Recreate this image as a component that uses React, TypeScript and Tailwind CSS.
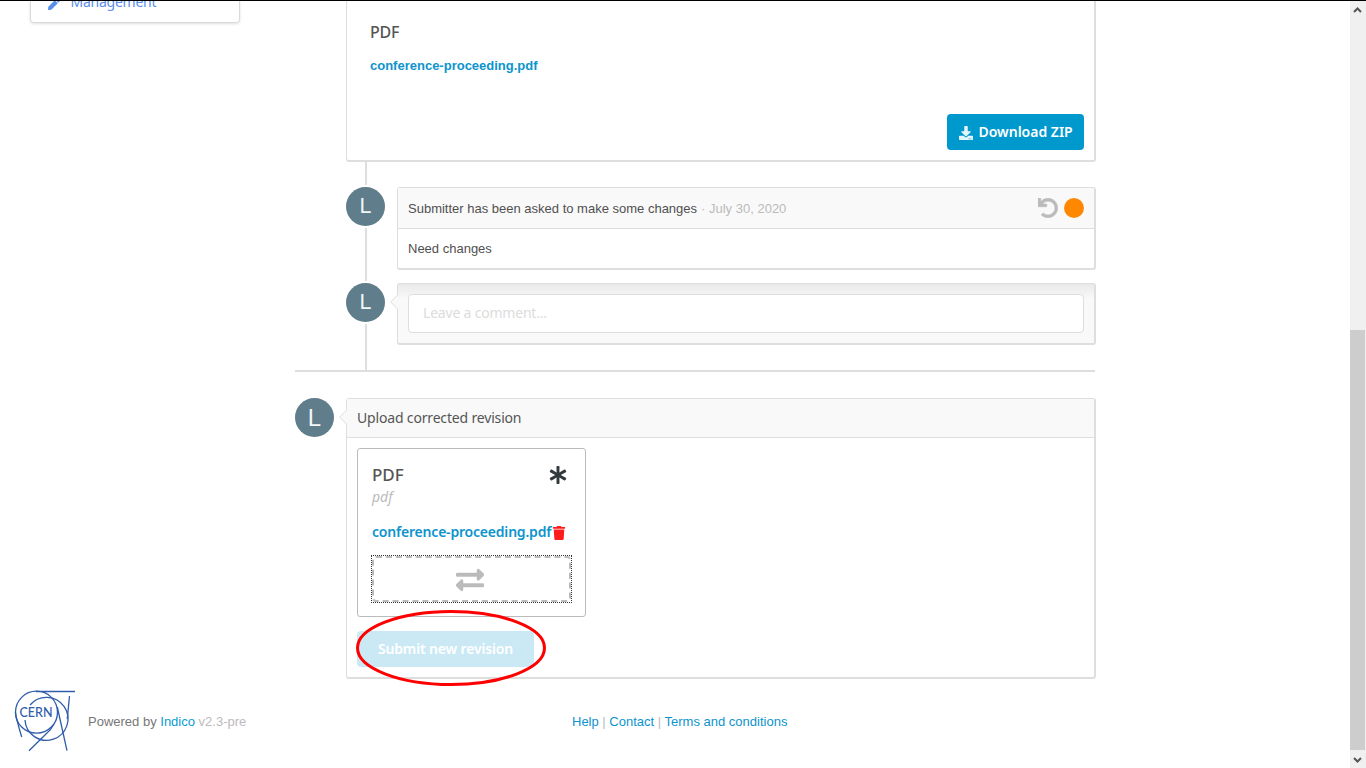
import type { ReactNode } from "react";
import { FaAsterisk, FaDownload, FaExchangeAlt, FaPen, FaTrash, FaUndo } from "react-icons/fa";

const ui = "font-['Noto_Sans',sans-serif]";

function Avatar({ ringed = false, large = false }: { ringed?: boolean; large?: boolean }) {
  return (
    <div
      className={`relative z-10 flex h-[39px] w-[39px] shrink-0 items-center justify-center rounded-full bg-[#607d8b] leading-none text-[#f4f6f7] ${large ? "pt-[1px] text-[24px]" : "pt-[1px] text-[21.5px]"} ${ringed ? "shadow-[0_0_0_2px_#fff]" : ""}`}
    >
      L
    </div>
  );
}

function Box({ className, children }: { className: string; children: ReactNode }) {
  return (
    <div className={`rounded-[3px] border border-r-2 border-b-2 border-[#dededf] ${className}`}>{children}</div>
  );
}

function Notch() {
  return (
    <svg className="absolute top-[11px] -left-[7px]" width="8" height="16" viewBox="0 0 8 16">
      <path d="M8 0.5 L0.700 8 L8 15.5" fill="#f9f9f9" stroke="#dededf" strokeWidth="1" />
    </svg>
  );
}

function CernLogo() {
  return (
    <svg width="62" height="62" viewBox="0 0 62 62" fill="none" stroke="#2f5cab" strokeWidth="1.3">
      <circle cx="22.500" cy="22.200" r="21" />
      <path d="M16 15 A21.500 21.500 0 1 1 11 30" />
      <path d="M22 1.500 H61" />
      <path d="M55.500 6 L53.300 29" />
      <path d="M43.300 17 L53 60.700" />
      <path d="M40 34 Q37 40 32 44 L15 60.700" />
      <path d="M1.400 22 Q2 28 7.700 47" />
      <text x="5.500" y="26.500" fill="#2f5cab" stroke="none" fontSize="13.500" textLength="33" lengthAdjust="spacingAndGlyphs" className="font-['Lato',sans-serif] font-medium">CERN</text>
    </svg>
  );
}

export default function App() {
  return (
    <div className="relative flex h-[768px] w-[1366px] overflow-hidden border-t border-black bg-white font-['Liberation_Sans',Arial,sans-serif] text-[13px] text-[#555]">
      <div className="flex w-[1350px] shrink-0 flex-col">
        <div className="flex h-[678px] shrink-0 pl-[30px]">
          <aside className="flex h-[22px] w-[210px] shrink-0 items-end rounded-b-[4px] border border-t-0 border-[#dadada] pb-[11px] pl-[17px] text-[#5b8ee8] shadow-[0_1px_3px_rgba(0,0,0,0.13)]">
            <FaPen size={12} className="mb-[1px]" />
            <span className={`ml-[10.5px] ${ui} text-[14px] leading-[18px] tracking-[-0.25px]`}>Management</span>
          </aside>

          <main className="ml-[55px] w-[801px] shrink-0">
            <div className="relative flex h-[369px] flex-col pl-[51px]">
              <div className="absolute top-[161px] bottom-0 left-[70px] w-[2px] bg-[#dededf]" />
              <Box className="flex h-[161px] shrink-0 flex-col rounded-t-none border-t-0 pt-[20px] pl-[23px]">
                <h3 className={`${ui} text-[16px] leading-[22px] font-medium tracking-[-0.2px]`}>PDF</h3>
                <a className="mt-[14px] font-bold leading-[18px] text-[#0c94cd]">conference-proceeding.pdf</a>
                <button className={`mt-[39px] mr-[10px] flex h-[36px] w-[137px] items-center self-end rounded-[4px] bg-[#0099ce] pb-[1px] pl-[12px] ${ui} text-[14px] font-semibold text-white`}>
                  <FaDownload size={14} className="mt-[2px] mr-[5.5px] opacity-90" />
                  <span className="whitespace-nowrap">Download ZIP</span>
                </button>
              </Box>

              <div className="mt-[25px] flex">
                <Avatar ringed />
                <Box className="ml-[12px] h-[83px] w-[699px] bg-white">
                  <div className="flex h-[41px] items-center border-b border-[#dededf] bg-[#f9f9f9] px-[10px]">
                    <span className="pt-[2px] text-[#505050]">Submitter has been asked to make some changes</span>
                    <span className="ml-[4px] pt-[2px] text-[#bbb]">· July 30, 2020</span>
                    <FaUndo size={20} className="mr-[6px] ml-auto text-[#bbb]" stroke="currentColor" strokeWidth="14" />
                    <span className="h-[20px] w-[20px] rounded-full bg-[#ff8800]" />
                  </div>
                  <p className="pt-[11px] pl-[10px] leading-[18px] text-[#505050]">Need changes</p>
                </Box>
              </div>

              <div className="mt-[13px] flex">
                <Avatar ringed />
                <div className="relative ml-[12px]">
                  <Box className="h-[62px] w-[699px] bg-linear-to-b from-[#e9e9e9] to-[#f9f9f9] to-25% p-[10px]">
                    <div className={`flex h-[39px] items-center rounded-[4px] border border-[#dededf] bg-white pb-[2px] pl-[14px] ${ui} text-[14px] tracking-[-0.2px] text-[#dcdcdc]`}>
                      Leave a comment...
                    </div>
                  </Box>
                  <Notch />
                </div>
              </div>
            </div>

            <div className="h-[2px] w-[800px] bg-[#dededf]" />

            <div className="mt-[26px] flex">
              <Avatar large />
              <div className="relative ml-[12px]">
                <Box className="h-[281px] w-[750px]">
                  <h2 className={`flex h-[39px] items-center border-b border-[#dededf] bg-[#f9f9f9] pb-[2px] pl-[10px] ${ui} text-[14px] tracking-[-0.170px]`}>
                    Upload corrected revision
                  </h2>
                  <div className={`mt-[10px] ml-[10px] h-[169px] w-[229px] rounded-[3px] border border-[#bbb] pt-[15px] pl-[14px] ${ui}`}>
                    <div className="flex h-[22px] items-center">
                      <h3 className="text-[17px] font-medium">PDF</h3>
                      <FaAsterisk size={18} className="mr-[18px] mb-[1px] ml-auto text-[#333a3d]" />
                    </div>
                    <p className="text-[14px] leading-[22px] text-[#bbb] italic">pdf</p>
                    <div className="mt-[12px] flex h-[22px] items-center">
                      <a className="text-[14px] font-semibold tracking-[-0.200px] whitespace-nowrap text-[#0c94cd]">conference-proceeding.pdf</a>
                      <FaTrash size={14} className="mt-[3px] ml-[1px] text-[#ff1c1c]" />
                    </div>
                    <div className="mt-[13px] -ml-[1px] h-[48px] w-[201px] border border-dotted border-[#333]">
                      <div className="flex h-full items-center justify-center rounded-[4px] border-2 border-dashed border-[#bbb] text-[#bbb]">
                        <FaExchangeAlt size={28} className="mt-[1px] mr-[3px]" stroke="currentColor" strokeWidth="8" />
                      </div>
                    </div>
                  </div>
                  <button className={`mt-[14px] ml-[10px] flex h-[36px] w-[177px] items-center justify-center rounded-[4px] bg-[#cbe9f5] pb-[2px] ${ui} text-[14px] font-semibold tracking-[-0.150px] whitespace-nowrap text-white`}>
                    Submit new revision
                  </button>
                </Box>
                <Notch />
                <svg className="absolute top-[211px] left-[9px]" width="192" height="78" viewBox="0 0 192 78">
                  <ellipse cx="96" cy="39" rx="93.500" ry="36.500" fill="none" stroke="#f00" strokeWidth="3" />
                </svg>
              </div>
            </div>
          </main>
        </div>

        <footer className="flex pl-[14px]">
          <div className="mt-[11px] h-[62px] w-[62px]"><CernLogo /></div>
          <p className="mt-[34px] ml-[12px] w-[484px] leading-[18px] text-[#777]">
            Powered by <a className="text-[#0c9bd2]">Indico</a> <span className="text-[#bbb]">v2.3-pre</span>
          </p>
          <nav className="mt-[34px] leading-[18px] whitespace-nowrap text-[#bbb]">
            <a className="text-[#0c94cd]">Help</a> | <a className="text-[#0c94cd]">Contact</a> | <a className="text-[#0c94cd]">Terms and conditions</a>
          </nav>
        </footer>
      </div>

      <div className="flex w-[16px] shrink-0 flex-col bg-[#f0f0f0]">
        <svg width="16" height="17" viewBox="0 0 16 17" fill="none" stroke="#555" strokeWidth="2">
          <path d="M4 11 L7.500 7.500 L11 11" />
        </svg>
        <div className="mt-[312px] h-[420px] w-[15px] bg-[#cdcdcd]" />
        <svg width="16" height="18" viewBox="0 0 16 18" fill="none" stroke="#555" strokeWidth="2">
          <path d="M4 8 L7.500 11.500 L11 8" />
        </svg>
      </div>
    </div>
  );
}
